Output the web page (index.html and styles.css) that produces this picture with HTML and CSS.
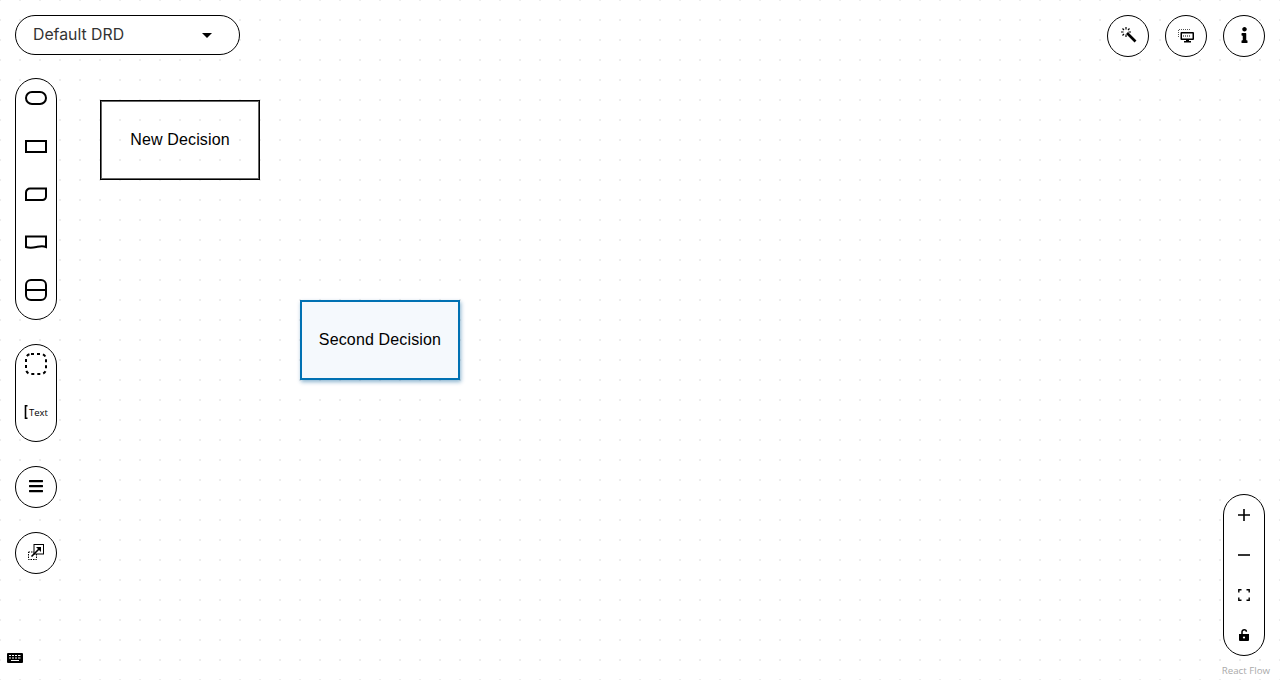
FILE: index.html
```html
<!DOCTYPE html>
<html lang="en">
<head>
    <meta charset="UTF-8">
    <meta name="viewport" content="width=device-width, initial-scale=1.0">
    <title>DMN Editor</title>
    <link rel="stylesheet" href="styles.css">
</head>
<body>
    <div class="canvas">
        <div class="node" style="left: 100px; top: 100px;">New Decision</div>
        <div class="node selected" style="left: 300px; top: 300px;">Second Decision</div>

        <div class="drd-select">
            <span class="drd-label">Default DRD</span>
            <svg class="caret" width="10" height="5" viewBox="0 0 10 5"><path d="M0 0h10L5 5z"/></svg>
        </div>

        <div class="top-actions">
            <button class="round">
                <svg width="18" height="18" viewBox="0 0 18 18">
                    <path d="M7 0v2.500M7 7.500V10M2 5h2.500M9.500 5H12M3.500 1.500L5 3M10.500 1.500L9 3M3.500 8.500L5 7" stroke="#000" stroke-width="1.200" fill="none"/>
                    <path d="M8 6l8.500 8.500" stroke="#000" stroke-width="2.600"/>
                </svg>
            </button>
            <button class="round">
                <svg width="16" height="14" viewBox="0 0 16 14">
                    <path d="M.5 8V.5H12" fill="none" stroke="#555" stroke-width="1" stroke-dasharray="1 1"/>
                    <path d="M3.500 3H15a1 1 0 0 1 1 1v6a1 1 0 0 1-1 1h-4v1h2v1.500H6V12h2v-1H3.500a1 1 0 0 1-1-1V4a1 1 0 0 1 1-1zM4 4.500v5h10.500v-5z"/>
                    <path d="M5 7h8" stroke="#000" stroke-width="1" stroke-dasharray="1 1"/>
                </svg>
            </button>
            <button class="round">
                <svg class="raised" width="7" height="16" viewBox="0 0 192 512"><path d="M20 424.229h20V279.771H20c-11.046 0-20-8.954-20-20V212c0-11.046 8.954-20 20-20h112c11.046 0 20 8.954 20 20v212.229h20c11.046 0 20 8.954 20 20V492c0 11.046-8.954 20-20 20H20c-11.046 0-20-8.954-20-20v-47.771c0-11.046 8.954-20 20-20zM96 0C56.235 0 24 32.235 24 72s32.235 72 72 72 72-32.235 72-72S135.764 0 96 0z"/></svg>
            </button>
        </div>

        <div class="left-tools">
            <div class="pill">
                <div class="tool">
                    <svg width="24" height="16" viewBox="0 0 24 16"><rect x="2" y="2" width="20" height="12" rx="6" class="shape"/></svg>
                </div>
                <div class="tool">
                    <svg width="24" height="16" viewBox="0 0 24 16"><rect x="2" y="3" width="20" height="11" class="shape"/></svg>
                </div>
                <div class="tool">
                    <svg width="24" height="16" viewBox="0 0 24 16"><path d="M6 2.500H22v8a3.500 3.500 0 0 1-3.500 3.500H2V6.500a4 4 0 0 1 4-4z" class="shape"/></svg>
                </div>
                <div class="tool">
                    <svg width="24" height="16" viewBox="0 0 24 16"><path d="M2 2.500h20V13c-3.500-1.600-6-.8-9.500 0S6 14.500 2 13z" class="shape"/></svg>
                </div>
                <div class="tool">
                    <svg width="24" height="24" viewBox="0 0 24 24"><rect x="2" y="2" width="20" height="20" rx="5" class="shape"/><path d="M2 12h20" class="shape"/></svg>
                </div>
            </div>
            <div class="pill">
                <div class="tool">
                    <svg width="24" height="24" viewBox="0 0 24 24"><rect x="2" y="2" width="20" height="20" rx="5" class="shape dashed"/></svg>
                </div>
                <div class="tool">
                    <svg width="24" height="16" viewBox="0 0 24 16">
                        <path d="M3.500 1.800H1.500v12.400h2" fill="none" stroke="#000" stroke-width="1.600"/>
                        <text x="5" y="11.500" class="text-icon">Text</text>
                    </svg>
                </div>
            </div>
            <button class="round">
                <svg class="raised" width="14" height="16" viewBox="0 0 448 512"><path d="M16 132h416c8.837 0 16-7.163 16-16V76c0-8.837-7.163-16-16-16H16C7.163 60 0 67.163 0 76v40c0 8.837 7.163 16 16 16zm0 160h416c8.837 0 16-7.163 16-16v-40c0-8.837-7.163-16-16-16H16c-8.837 0-16 7.163-16 16v40c0 8.837 7.163 16 16 16zm0 160h416c8.837 0 16-7.163 16-16v-40c0-8.837-7.163-16-16-16H16c-8.837 0-16 7.163-16 16v40c0 8.837 7.163 16 16 16z"/></svg>
            </button>
            <button class="round">
                <svg class="raised" width="16" height="16" viewBox="0 0 16 16">
                    <rect x=".5" y="8" width="8" height="7.500" fill="none" stroke="#000" stroke-dasharray="1.500 1"/>
                    <rect x="6" y=".5" width="9.500" height="9.500" fill="#fff" stroke="#000"/>
                    <path d="M3.500 12.500L12 4" stroke="#000" stroke-width="1.600"/>
                    <path d="M8 3h5v5z"/>
                </svg>
            </button>
        </div>

        <div class="zoom-controls">
            <button class="zoom-btn">
                <svg width="12" height="12" viewBox="0 0 12 12"><path d="M6 0v12M0 6h12" stroke="#000" stroke-width="1.600"/></svg>
            </button>
            <button class="zoom-btn">
                <svg width="12" height="12" viewBox="0 0 12 12"><path d="M0 6h12" stroke="#000" stroke-width="1.600"/></svg>
            </button>
            <button class="zoom-btn">
                <svg width="12" height="12" viewBox="0 0 12 12"><path d="M.8 3.500V.8h2.700M8.500 .8h2.700v2.700M11.200 8.500v2.700H8.500M3.500 11.200H.8V8.500" fill="none" stroke="#000" stroke-width="1.400"/></svg>
            </button>
            <button class="zoom-btn">
                <svg width="10" height="12" viewBox="0 0 10 12"><path d="M0 5h10v6a1 1 0 0 1-1 1H1a1 1 0 0 1-1-1z"/><path d="M3 5V2.800a2.200 2 0 0 1 4.400 0" fill="none" stroke="#000" stroke-width="1.500"/><circle cx="5" cy="8.500" r="1.100" fill="#fff"/></svg>
            </button>
        </div>

        <svg class="keyboard" width="16" height="10" viewBox="0 0 16 10">
            <path d="M1 0h14a1 1 0 0 1 1 1v8a1 1 0 0 1-1 1H1a1 1 0 0 1-1-1V1a1 1 0 0 1 1-1z"/>
            <path d="M2 2.500h2M5 2.500h2M8 2.500h2M11 2.500h2.500M2 5h2M5 5h2M8 5h2M11 5h2.500M4 7.500h8" stroke="#fff" stroke-width="1.200"/>
        </svg>

        <div class="attribution">React Flow</div>
    </div>
</body>
</html>
```

FILE: styles.css
```css
html, body { margin: 0; height: 100%; overflow: hidden; }
body { font-family: "Liberation Sans", Arial, sans-serif; color: #151515; background: #fff; }
button { padding: 0; border: none; background: none; display: flex; align-items: center; justify-content: center; cursor: pointer; }

.canvas { position: relative; height: 680px; background-image: radial-gradient(circle, #ededed 1px, transparent 1px); background-size: 20px 20px; background-position: -10px -10px; }

.node { position: absolute; box-sizing: border-box; width: 160px; height: 80px; display: flex; align-items: center; justify-content: center; font-size: 16px; letter-spacing: 0.15px; border: 1px solid #000; box-shadow: inset 0 0 0 1px rgba(0, 0, 0, 0.6); color: #000; }
.node.selected { border: 2px solid #0071b3; background: #f5f9fd; box-shadow: 1px 2px 4px rgba(0, 90, 150, 0.45); }

.drd-select { position: absolute; left: 15px; top: 15px; box-sizing: border-box; width: 225px; height: 40px; padding: 0 27px 0 17px; display: flex; align-items: center; justify-content: space-between; background: #fff; border: 1px solid #000; border-radius: 20px; font-family: Inter, sans-serif; font-size: 15.800px; color: #333; }
.drd-label { margin-bottom: 2px; }

.round { box-sizing: border-box; width: 42px; height: 42px; background: #fff; border: 1px solid #000; border-radius: 50%; }
.raised { margin-bottom: 2px; }

.top-actions { position: absolute; top: 15px; right: 15px; display: flex; gap: 16px; }

.left-tools { position: absolute; left: 15px; top: 78px; display: flex; flex-direction: column; gap: 24px; }
.pill { box-sizing: border-box; width: 42px; padding-bottom: 10px; display: flex; flex-direction: column; gap: 10px; background: #fff; border: 1px solid #000; border-radius: 21px; }
.tool { height: 38px; display: flex; align-items: center; justify-content: center; }
.shape { fill: #fff; stroke: #000; stroke-width: 2; }
.dashed { stroke-dasharray: 3 3; }
.text-icon { font-family: "Open Sans", sans-serif; font-size: 9.500px; font-weight: 500; fill: #000; }

.zoom-controls { position: absolute; right: 15px; top: 494px; box-sizing: border-box; width: 42px; background: #fff; border: 1px solid #000; border-radius: 21px; }
.zoom-btn { width: 100%; height: 40px; }

.keyboard { position: absolute; left: 7px; top: 653px; }

.attribution { position: absolute; right: 10px; bottom: 3px; font-family: "Open Sans", sans-serif; font-size: 9.700px; color: #aaa; }
```
